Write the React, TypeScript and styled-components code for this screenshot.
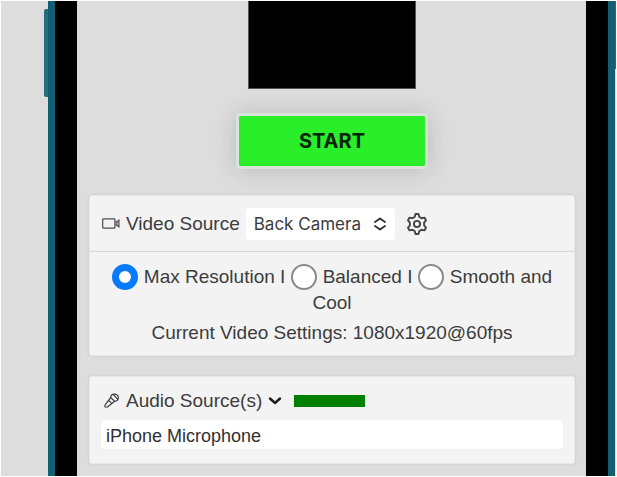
import React, { useState } from "react";
import styled, { createGlobalStyle } from "styled-components";

const GlobalStyle = createGlobalStyle`
  * { box-sizing: border-box; }
  body {
    margin: 0;
    background: #fff;
    color: #3c3c3c;
    font: 19px/25px "Liberation Sans", Arial, sans-serif;
  }
`;

const Page = styled.main`
  display: flex;
  margin: 1px 1px 0 1px;
  padding-left: 43px;
  background: #ddd;
`;

const SideButton = styled.span<{ $side: "left" | "right" }>`
  flex: none;
  width: ${(p) => (p.$side === "left" ? 4 : 1)}px;
  height: ${(p) => (p.$side === "left" ? 88 : 68)}px;
  margin-top: ${(p) => (p.$side === "left" ? 8 : 0)}px;
  border-radius: ${(p) => (p.$side === "left" ? "2px 0 0 2px" : "0")};
  background: #286d7e;
`;

const Phone = styled.div`
  flex: 1;
  min-width: 0;
  border: solid #125e73;
  border-width: 0 7px;
  background: #000;
  padding: 0 22px;
`;

const Screen = styled.div`
  display: flex;
  flex-direction: column;
  align-items: center;
  padding: 0 11px 12px 12px;
  background: #ddd;
`;

const Preview = styled.div`
  width: 168px;
  height: 88px;
  border: 1px solid #555;
  border-top: 0;
  background: #000;
`;

const StartButton = styled.button`
  width: 192px;
  height: 56px;
  margin: 24px 0 26px;
  padding: 0;
  border: 3px solid #d9e3d9;
  border-radius: 4px;
  background: #2bee2b;
  background-clip: padding-box;
  box-shadow: 0 1px 24px rgba(0, 0, 0, 0.16);
  color: #062406;
  font: 700 20px/24px Inter, sans-serif;
`;

const Panel = styled.section`
  width: 100%;
  border: 1px solid #e8e8e8;
  border-radius: 3px;
  background: #f3f3f3;
  box-shadow: 0 0 3px rgba(0, 0, 0, 0.1);

  & + & { margin-top: 20px; }
`;

const SourceBar = styled.div`
  display: flex;
  align-items: center;
  height: 56px;
  padding: 0 12px;
  border-bottom: 1px solid #d4d4d4;
`;

const SourceLabel = styled.label`
  display: flex;
  align-items: center;
  gap: 6px;
`;

const SelectBox = styled.span`
  display: grid;
  align-items: center;
  width: 149px;
  height: 32px;
  margin: 0 11px 0 6px;
  border-radius: 4px;
  background: #fff;

  > * { grid-area: 1 / 1; }
  > svg { justify-self: end; margin-right: 8px; pointer-events: none; }
`;

const Select = styled.select`
  width: 100%;
  height: 100%;
  padding: 0 28px 0 8px;
  border: 0;
  border-radius: 4px;
  appearance: none;
  background: transparent;
  color: #3c3c3c;
  font: 17px/24px Inter, sans-serif;
`;

const PlainButton = styled.button`
  display: flex;
  align-items: center;
  gap: 6px;
  padding: 0;
  border: 0;
  background: none;
  color: inherit;
  font: inherit;
`;

const Quality = styled.fieldset`
  margin: 0;
  padding: 12px 20px 10px;
  border: 0;
  text-align: center;
`;

const Radio = styled.input`
  appearance: none;
  width: 26px;
  height: 26px;
  margin: 0 6px 0 0;
  border: 2px solid #8a8a8a;
  border-radius: 50%;
  background: #fff;
  vertical-align: -7px;

  &:checked { border: 7px solid #077bff; }
`;

const Status = styled.p`
  margin: 5px 0 0;
`;

const AudioBody = styled.div`
  padding: 11px 11px 14px;
`;

const AudioBar = styled.div`
  display: flex;
  align-items: center;
  gap: 12px;
  padding-left: 3px;
`;

const Meter = styled.div`
  width: 71px;
  height: 12px;
  background: #008000;
`;

const DeviceInput = styled.input`
  display: block;
  width: 100%;
  height: 29px;
  margin-top: 7px;
  padding: 4px 5px 0;
  border: 0;
  border-radius: 4px;
  background: #fff;
  color: #303030;
  font: 18px/24px "Liberation Sans", Arial, sans-serif;
`;

const CameraIcon = () => (
  <svg width="18" height="12" viewBox="0 0 18 12" fill="none" stroke="#4c4c4c" strokeWidth="1.2" aria-hidden="true">
    <rect x="0.7" y="0.8" width="12.2" height="9.4" rx="0.8" />
    <path d="M12.9 4 H14.4 L16.9 2.2 V8.8 L14.4 7 H12.9 M14.9 3.8 V7.2" />
  </svg>
);

const MicIcon = () => (
  <svg width="16" height="16" viewBox="0 0 16 16" fill="none" stroke="#3c3c3c" strokeWidth="1.2" strokeLinecap="round" strokeLinejoin="round" aria-hidden="true">
    <path d="M6.6 4.5 C6.9 2.2 8.8 1 10.8 1.2 C13.2 1.4 14.6 3.1 14.3 5 C14 7 12.5 8.4 10.6 8.2 Z" />
    <path d="M6.4 4.8 L1 12.2 V14 H3.4 L10.4 8.6 M5.2 8 L7 9.6 M9.4 1.7 L13.8 6.4" />
  </svg>
);

const UpDownIcon = () => (
  <svg width="14" height="14" viewBox="0 0 14 14" fill="none" stroke="#353535" strokeWidth="1.9" strokeLinecap="round" strokeLinejoin="round" aria-hidden="true">
    <path d="M2 5 L7 1.4 L12 5 M2 9 L7 12.6 L12 9" />
  </svg>
);

const GearIcon = () => (
  <svg width="22" height="24" viewBox="0 0 22 24" fill="none" stroke="#454545" strokeWidth="1.9" strokeLinejoin="round" aria-hidden="true">
    <path d="M9.5 2 H12.5 L13.3 5 L15.5 6.2 L18.4 5.6 L20 8.3 L18.1 10.6 V13.4 L20 15.7 L18.4 18.4 L15.5 17.8 L13.3 19 L12.5 22 H9.5 L8.7 19 L6.5 17.8 L3.6 18.4 L2 15.7 L3.9 13.4 V10.6 L2 8.3 L3.6 5.6 L6.5 6.2 L8.7 5 Z" />
    <circle cx="11" cy="12" r="3.1" />
  </svg>
);

const ChevronIcon = () => (
  <svg width="14" height="10" viewBox="0 0 14 10" fill="none" stroke="#202020" strokeWidth="2.5" strokeLinecap="round" strokeLinejoin="round" aria-hidden="true">
    <path d="M2 2.5 L7 7 L12 2.5" />
  </svg>
);

const MODES = ["Max Resolution", "Balanced", "Smooth and Cool"];

export default function App() {
  const [mode, setMode] = useState(MODES[0]);
  const [microphone, setMicrophone] = useState("iPhone Microphone");

  return (
    <>
      <GlobalStyle />
      <Page>
        <SideButton $side="left" />
        <Phone>
          <Screen>
            <Preview />
            <StartButton type="button">START</StartButton>
            <Panel>
              <SourceBar>
                <SourceLabel htmlFor="camera">
                  <CameraIcon />
                  Video Source
                </SourceLabel>
                <SelectBox>
                  <Select id="camera" defaultValue="back">
                    <option value="back">Back Camera</option>
                  </Select>
                  <UpDownIcon />
                </SelectBox>
                <PlainButton type="button" aria-label="Video settings">
                  <GearIcon />
                </PlainButton>
              </SourceBar>
              <Quality aria-label="Video quality">
                {MODES.map((name, i) => (
                  <React.Fragment key={name}>
                    {i > 0 && " I "}
                    <label>
                      <Radio
                        type="radio"
                        name="quality"
                        checked={mode === name}
                        onChange={() => setMode(name)}
                      />
                      {name}
                    </label>
                  </React.Fragment>
                ))}
                <Status>Current Video Settings: 1080x1920@60fps</Status>
              </Quality>
            </Panel>
            <Panel>
              <AudioBody>
                <AudioBar>
                  <PlainButton type="button" aria-expanded="true">
                    <MicIcon />
                    Audio Source(s)
                    <ChevronIcon />
                  </PlainButton>
                  <Meter role="meter" aria-label="Audio level" aria-valuenow={100} />
                </AudioBar>
                <DeviceInput
                  aria-label="Audio source"
                  value={microphone}
                  onChange={(e) => setMicrophone(e.target.value)}
                />
              </AudioBody>
            </Panel>
          </Screen>
        </Phone>
        <SideButton $side="right" />
      </Page>
    </>
  );
}
